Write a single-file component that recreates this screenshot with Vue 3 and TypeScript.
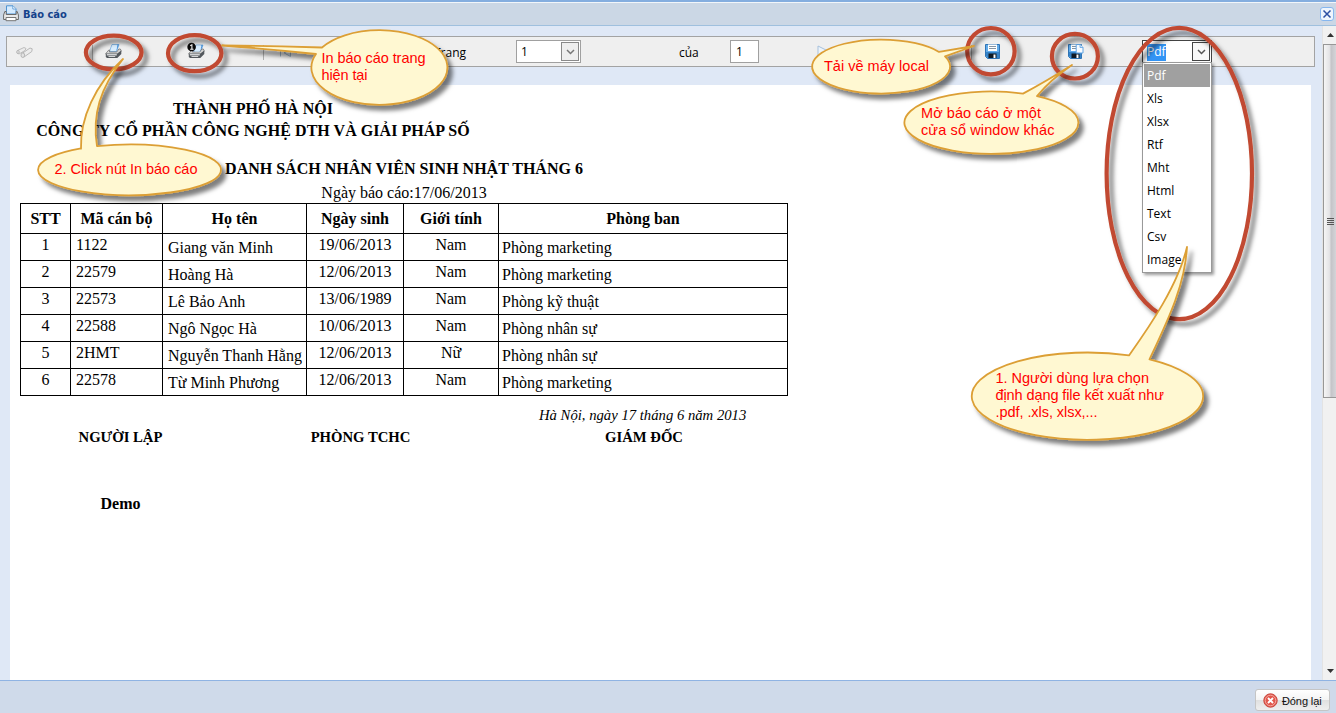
<script setup lang="ts">
import { ref } from 'vue'

interface Employee {
  code: string
  name: string
  born: string
  sex: string
  dept: string
}

const employees: Employee[] = [
  { code: '1122', name: 'Giang văn Minh', born: '19/06/2013', sex: 'Nam', dept: 'Phòng marketing' },
  { code: '22579', name: 'Hoàng Hà', born: '12/06/2013', sex: 'Nam', dept: 'Phòng marketing' },
  { code: '22573', name: 'Lê Bảo Anh', born: '13/06/1989', sex: 'Nam', dept: 'Phòng kỹ thuật' },
  { code: '22588', name: 'Ngô Ngọc Hà', born: '10/06/2013', sex: 'Nam', dept: 'Phòng nhân sự' },
  { code: '2HMT', name: 'Nguyễn Thanh Hằng', born: '12/06/2013', sex: 'Nữ', dept: 'Phòng nhân sự' },
  { code: '22578', name: 'Từ Minh Phương', born: '12/06/2013', sex: 'Nam', dept: 'Phòng marketing' },
]

const formats: string[] = ['Pdf', 'Xls', 'Xlsx', 'Rtf', 'Mht', 'Html', 'Text', 'Csv', 'Image']
const selected = ref<string>('Pdf')

interface Ring { cx: number; cy: number; rx: number; ry: number }
const rings: Ring[] = [
  { cx: 113.7, cy: 52.5, rx: 27.8, ry: 16.8 },
  { cx: 194.7, cy: 53.2, rx: 26.7, ry: 18 },
  { cx: 990.9, cy: 51.2, rx: 23.7, ry: 23.2 },
  { cx: 1074.9, cy: 56.2, rx: 23, ry: 22.3 },
  { cx: 1179.3, cy: 173.5, rx: 72.7, ry: 145.7 },
]

interface Callout { d: string; x: number; lines: { y: number; text: string; w: number }[] }
const callouts: Callout[] = [
  {
    d: 'M81 148.7C80 118 95 85 123 59C100 88 92 115 97 146.2A91.5 25.3 0 1 1 81 148.4Z',
    x: 54.5,
    lines: [{ y: 174, text: '2. Click nút In báo cáo', w: 143 }],
  },
  {
    d: 'M322 47.5A68 37.3 0 1 1 316 54Q270 49 222 45.5Q270 45.5 322 47.5Z',
    x: 321.5,
    lines: [
      { y: 63, text: 'In báo cáo trang', w: 104 },
      { y: 80, text: 'hiện tại', w: 46 },
    ],
  },
  {
    d: 'M945 56.4A69 27 0 1 1 939 51.9L974 46Z',
    x: 824,
    lines: [{ y: 71, text: 'Tải về máy local', w: 105 }],
  },
  {
    d: 'M1037 96.1A87 31.2 0 1 1 1023 93.6Q1045 82 1072 65Q1050 80 1037 96.1Z',
    x: 921,
    lines: [
      { y: 118, text: 'Mở báo cáo ở một', w: 120 },
      { y: 135, text: 'cửa sổ window khác', w: 133.5 },
    ],
  },
  {
    d: 'M1149.5 359.3A115.7 43.7 0 1 1 1129 355.4C1150 326 1178 285 1187 247C1185 285 1168 320 1149.5 359.3Z',
    x: 995.5,
    lines: [
      { y: 383, text: '1. Người dùng lựa chọn', w: 153.5 },
      { y: 400, text: 'định dạng file kết xuất như', w: 168.5 },
      { y: 417, text: '.pdf, .xls, xlsx,...', w: 102 },
    ],
  },
]
</script>

<template>
  <div class="window">
    <header class="titlebar">
      <svg class="title-icon" width="16" height="17" viewBox="0 0 16 17">
        <path d="M3.500 9V.8h6.500l3 3V9z" fill="#d5ebff" stroke="#4f93d2" />
        <path d="M9.800 1v3h3" fill="#fff" stroke="#4f93d2" stroke-width=".8" />
        <path d="M1.800 6.500L.6 10v4.500h14.800V10l-1.200-3.500h-1V9.500h-10V6.500z" fill="#e9e9e9" stroke="#6a6a6a" />
        <path d="M3 12.500h10v3.200H3z" fill="#fff" stroke="#777" />
      </svg>
      <span class="title">Báo cáo</span>
      <button class="close" aria-label="Đóng">
        <svg width="14" height="14" viewBox="0 0 14 14">
          <rect x=".5" y=".5" width="13" height="13" rx="2.500" fill="#eef5fd" stroke="#86b6ee" />
          <path d="M3.500 3.500l7 7m0-7l-7 7" stroke="#2b4fa3" stroke-width="1.500" />
        </svg>
      </button>
    </header>

    <div class="body">
      <main class="viewer">
        <div class="toolbar">
          <span class="tool">
            <svg width="17" height="13" viewBox="0 0 17 13">
              <path d="M1.500 4.500L8 1.500l2 1-1 2-6 3.500-2-1z" fill="#ececec" stroke="#bdbdbd" />
              <path d="M6 7.500L14 2l2.200.8-.4 2.700L8 11z" fill="#ececec" stroke="#b8b8b8" />
              <ellipse cx="6.800" cy="9.200" rx="1.800" ry="2.300" fill="#e2e2e2" stroke="#b4b4b4" />
              <ellipse cx="2" cy="6" rx="1.200" ry="1.700" fill="#e2e2e2" stroke="#b8b8b8" />
            </svg>
          </span>
          <span class="sep"></span>
          <span class="tool">
            <svg width="17" height="16" viewBox="0 0 17 16">
              <path d="M4.500 8.500L7 1.500h7L11.500 8.500z" fill="#d8edfe" stroke="#7fb2e2" stroke-width=".9" />
              <path d="M12 1.500h2l-2.500 7z" fill="#4f97dc" />
              <path d="M.8 10.500l3-3.500h1l-.5 2h7.500l2-3h1.500l1 2-3.500 4H1.500z" fill="#d6d6d6" stroke="#666" stroke-width=".7" />
              <path d="M5.500 8L7.500 2.200h5L10.500 8z" fill="#d8edfe" />
              <path d="M.8 10.500h11.500l4-3v3.500l-4 4H2l-1.200-1z" fill="#53585d" />
              <path d="M1.800 11h10v1.500h-10z" fill="#cfd1d3" />
              <path d="M3 13.200h7.500l-.6.9H4z" fill="#fff" />
            </svg>
          </span>
          <span class="tool">
            <svg width="19" height="18" viewBox="0 0 19 18">
              <path d="M6.500 10L9 3h7l-2.500 7z" fill="#d8edfe" stroke="#7fb2e2" stroke-width=".9" />
              <path d="M14 3h2l-2.500 7z" fill="#4f97dc" />
              <path d="M1.800 11.500l3-3.500h1l-.5 2h7.500l2-3h1.500l1 2-3.500 4H2.500z" fill="#d6d6d6" stroke="#666" stroke-width=".7" />
              <path d="M7.500 9.500l2-5.800h5l-2 5.800z" fill="#d8edfe" />
              <path d="M1.800 11.500h11.500l4-3V12l-4 4H3l-1.200-1z" fill="#53585d" />
              <path d="M2.800 12h10v1.500h-10z" fill="#cfd1d3" />
              <path d="M4 14.200h7.500l-.6.9H5z" fill="#fff" />
              <circle cx="4.600" cy="5" r="4.300" fill="#080808" />
              <path d="M3.200 3.800L4.900 2.800v4.500M3.200 7.300h3.300" stroke="#fff" stroke-width="1.100" fill="none" />
            </svg>
          </span>
          <span class="sep"></span>
          <span class="tool">
            <svg width="13" height="10" viewBox="0 0 13 10">
              <path d="M1.500 1v7.500M11.500 1L5 4.800l6.500 3.700z" fill="#dde6ee" stroke="#9db4c8" />
            </svg>
          </span>
          <label class="label page-label">Trang</label>
          <div class="combo combo-page">
            <span class="combo-value">1</span>
            <span class="arrow"><svg width="9" height="6" viewBox="0 0 9 6"><path d="M1 1l3.500 3.500L8 1" fill="none" stroke="#777" stroke-width="1.500" /></svg></span>
          </div>
          <label class="label">của</label>
          <div class="count">1</div>
          <span class="tool">
            <svg width="12" height="12" viewBox="0 0 12 12"><path d="M1 1l10 5L1 11z" fill="#eef4fa" stroke="#a7c1dc" /></svg>
          </span>
          <span class="sep"></span>
          <span class="tool">
            <svg width="15" height="15" viewBox="0 0 15 15">
              <path d="M.5.500h14v14H2.500l-2-2z" fill="#62abe9" stroke="#2f74b5" />
              <path d="M1 8h13v6H3l-2-2z" fill="#3583c8" />
              <path d="M3 .5h9V7H3z" fill="#fff" />
              <path d="M4 2.500h7M4 4.500h7" stroke="#8594a3" />
              <path d="M3.500 9.500h8V14h-8z" fill="#101a24" />
              <path d="M8.500 10.500h2V14h-2z" fill="#fff" />
            </svg>
          </span>
          <span class="tool">
            <svg width="16" height="15" viewBox="0 0 16 15">
              <path d="M.5.500h13v14H2.500l-2-2z" fill="#62abe9" stroke="#2f74b5" />
              <path d="M1 8h12v6H3l-2-2z" fill="#3583c8" />
              <path d="M3 .5h6V7H3z" fill="#fff" />
              <path d="M4 2.500h4M4 4.500h4" stroke="#8594a3" />
              <path d="M3.500 9.500h8V14h-8z" fill="#101a24" />
              <path d="M8.500 10.500h2V14h-2z" fill="#fff" />
              <path d="M8.200.500h3.800l3 3v5.500H8.200z" fill="#f7fbff" stroke="#5fa3e2" />
              <path d="M12 .5v3h3" fill="#cfe6fb" stroke="#5fa3e2" stroke-width=".8" />
            </svg>
          </span>
          <div class="combo combo-format">
            <span class="combo-value"><mark>{{ selected }}</mark></span>
            <span class="arrow"><svg width="9" height="6" viewBox="0 0 9 6"><path d="M1 1l3.500 3.500L8 1" fill="none" stroke="#555" stroke-width="1.500" /></svg></span>
            <ul class="menu">
              <li v-for="f in formats" :key="f" :class="{ active: f === selected }" @click="selected = f">{{ f }}</li>
            </ul>
          </div>
        </div>

        <article class="paper">
          <div class="org">
            <p class="city">THÀNH PHỐ HÀ NỘI</p>
            <p class="company">CÔNG TY CỔ PHẦN CÔNG NGHỆ DTH VÀ GIẢI PHÁP SỐ</p>
          </div>
          <h1>DANH SÁCH NHÂN VIÊN SINH NHẬT THÁNG 6</h1>
          <p class="date">Ngày báo cáo:17/06/2013</p>
          <table>
            <colgroup><col class="c1" /><col class="c2" /><col class="c3" /><col class="c4" /><col class="c5" /><col class="c6" /></colgroup>
            <thead>
              <tr><th>STT</th><th>Mã cán bộ</th><th>Họ tên</th><th>Ngày sinh</th><th>Giới tính</th><th>Phòng ban</th></tr>
            </thead>
            <tbody>
              <tr v-for="(e, i) in employees" :key="e.code">
                <td class="mid">{{ i + 1 }}</td>
                <td class="code">{{ e.code }}</td>
                <td class="low name">{{ e.name }}</td>
                <td class="mid">{{ e.born }}</td>
                <td class="mid">{{ e.sex }}</td>
                <td class="low dept">{{ e.dept }}</td>
              </tr>
            </tbody>
          </table>
          <p class="place">Hà Nội, ngày 17 tháng 6 năm 2013</p>
          <div class="signs">
            <span>NGƯỜI LẬP</span><span>PHÒNG TCHC</span><span>GIÁM ĐỐC</span>
          </div>
          <p class="signer">Demo</p>
        </article>
      </main>

      <div class="scrollbar">
        <span class="sb-btn"><svg width="7" height="4" viewBox="0 0 7 4"><path d="M0 4l3.500-4L7 4z" fill="#333" /></svg></span>
        <span class="thumb"><i></i><i></i><i></i><i></i></span>
        <span class="sb-btn sb-down"><svg width="7" height="4" viewBox="0 0 7 4"><path d="M0 0h7L3.500 4z" fill="#333" /></svg></span>
      </div>
    </div>

    <footer class="footer">
      <button class="btn">
        <svg width="15" height="15" viewBox="0 0 15 15">
          <circle cx="7.500" cy="7.500" r="6.700" fill="#e2574c" stroke="#c9483f" />
          <circle cx="7.500" cy="7.500" r="5.300" fill="none" stroke="#f3aaa2" />
          <path d="M5 5l5 5m0-5l-5 5" stroke="#fff" stroke-width="1.900" />
        </svg>
        <span>Đóng lại</span>
      </button>
    </footer>

    <svg class="notes" width="1336" height="713" viewBox="0 0 1336 713">
      <defs>
        <filter id="shade" x="0" y="0" width="1336" height="713" filterUnits="userSpaceOnUse">
          <feDropShadow dx="4.500" dy="5" stdDeviation="2" flood-color="#000" flood-opacity=".5" />
        </filter>
      </defs>
      <g v-for="(r, i) in rings" :key="'r' + i" filter="url(#shade)">
        <ellipse :cx="r.cx" :cy="r.cy" :rx="r.rx" :ry="r.ry" fill="none" stroke="#c14a30" stroke-width="4.200" />
      </g>
      <g v-for="(c, i) in callouts" :key="'c' + i">
        <path :d="c.d" fill="#fff8d2" stroke="#dc9f35" stroke-width="1.800" stroke-linejoin="round" filter="url(#shade)" />
        <text v-for="l in c.lines" :key="l.y" :x="c.x" :y="l.y" :textLength="l.w">{{ l.text }}</text>
      </g>
    </svg>
  </div>
</template>

<style scoped>
* { box-sizing: border-box; }
.window {
  position: relative;
  width: 1336px;
  height: 713px;
  overflow: hidden;
  display: flex;
  flex-direction: column;
  background: #dfe8f6;
  font: 12px/16px "Open Sans", "Noto Sans", sans-serif;
  color: #000;
}
p, h1, ul { margin: 0; padding: 0; }
.titlebar {
  flex: none;
  height: 26px;
  display: flex;
  align-items: center;
  padding: 1px 2px 0 3px;
  border-top: 2px solid #85aedf;
  border-bottom: 1px solid #9fc0de;
  background: #cbd7e5;
  box-shadow: inset 0 1px #f2f6fa;
}
.title-icon { margin-top: -1px; }
.title { margin: 2px 0 0 4px; font: bold 11px/16px "DejaVu Sans Condensed", sans-serif; color: #15428b; }
.close { margin-left: auto; width: 14px; height: 14px; border: 0; padding: 0; background: none; display: flex; }
.body { flex: 1; display: flex; min-height: 0; }
.viewer { flex: 1; display: flex; flex-direction: column; padding: 10px 7px 0 6px; }
.toolbar {
  flex: none;
  width: 1309px;
  height: 31px;
  border: 1px solid #a3a3a3;
  background: #efefef;
  display: grid;
  grid-template-columns: 85px 13px 82px 76px 15px 158px 80px 163px 51px 87px 154px 14px 83px 74px 71px;
  align-items: start;
}
.tool { padding-top: 7px; height: 29px; display: flex; }
.tool:first-child { padding: 9px 0 0 9px; }
.tool:nth-child(3) { padding-top: 6px; }
.tool:nth-child(4) { padding-top: 5px; }
.tool:nth-child(6) { padding: 11px 0 0 1px; }
.tool:nth-child(11) { padding-top: 8px; }
.sep { width: 1px; height: 15px; margin-top: 8px; background: #b0b0b0; }
.label { padding-top: 8px; line-height: 16px; }
.page-label { margin-left: -2px; }
.combo {
  position: relative;
  margin-top: 3px;
  height: 23px;
  width: 65px;
  border: 1px solid #a0a0a0;
  background: #fff;
  display: flex;
  justify-content: space-between;
  padding: 1px 1px 1px 4px;
}
.combo-format { width: 70px; border-color: #444; z-index: 2; padding-left: 4px; }
.combo-value { padding-top: 2px; }
mark { background: #3294f5; color: #fff; display: block; height: 17px; line-height: 16px; }
.arrow {
  width: 18px;
  height: 19px;
  border: 1px solid #8a8a8a;
  background: #efefef;
  display: flex;
  align-items: center;
  justify-content: center;
}
.combo-format .arrow { background: #f8f8f8; border-color: #444; }
.count { margin-top: 3px; width: 29px; height: 23px; border: 1px solid #a0a0a0; background: #fff; padding: 3px 0 0 5px; }
.menu {
  position: absolute;
  left: -1px;
  top: 21px;
  width: 70px;
  height: 211px;
  list-style: none;
  background: #fff;
  border: 1px solid #999;
  padding: 1px;
  box-shadow: 2px 2px 3px rgba(0, 0, 0, .4);
}
.menu li { height: 23px; line-height: 23px; padding-left: 3px; }
.menu li.active { background: #a0a0a0; color: #fff; }
.paper {
  flex: 1;
  width: 1301px;
  margin: 18px 0 0 4px;
  background: #fff;
  padding: 13px 0 0 10px;
  font: 16px/20px "Liberation Serif", serif;
}
.org { width: 466px; text-align: center; font-weight: bold; line-height: 22px; padding-bottom: 17px; }
.org p { white-space: nowrap; letter-spacing: .04px; }
h1 { width: 768px; text-align: center; font-size: 16px; line-height: 20px; }
.date { width: 768px; text-align: center; line-height: 20px; margin-top: 4px; }
table { border-collapse: collapse; table-layout: fixed; width: 768px; margin-top: 0; }
th, td { border: 1px solid #000; padding: 0; white-space: nowrap; }
th { height: 30px; line-height: 20px; }
td { height: 27px; line-height: 18px; vertical-align: top; padding-top: 2px; }
.mid { text-align: center; }
.code { padding-left: 5px; }
.low { padding-top: 5px; }
.name { padding-left: 5px; }
.dept { padding-left: 3px; }
.c1 { width: 50px; }
.c2 { width: 92px; }
.c3 { width: 144px; }
.c4 { width: 97px; }
.c5 { width: 95px; }
.c6 { width: 289px; }
.place { font-style: italic; font-size: 14.700px; line-height: 20px; padding: 9px 0 0 519px; }
.signs { display: grid; grid-template-columns: 201px 279px 288px; font-weight: bold; font-size: 14.700px; line-height: 24px; text-align: center; }
.signer { font-weight: bold; width: 201px; text-align: center; padding-top: 45px; }
.scrollbar {
  flex: none;
  width: 14px;
  display: flex;
  flex-direction: column;
  background: #f1f1f1;
  border-left: 1px solid #e3e3e3;
}
.sb-btn { height: 18px; display: flex; align-items: center; justify-content: center; padding-left: 2px; }
.sb-down { margin-top: auto; }
.thumb {
  height: 354px;
  border: 1px solid #979797;
  border-right: 0;
  background: linear-gradient(90deg, #f5f5f5, #e4e4e6 45%, #c4c4c8 60%, #d4d4d8);
  display: flex;
  flex-direction: column;
  align-items: center;
  justify-content: center;
  gap: 1px;
}
.thumb i { width: 7px; height: 1px; background: #555; }
.footer {
  flex: none;
  height: 33px;
  border-top: 1px solid #8fb3e3;
  background: #cfdaea;
  display: flex;
  justify-content: flex-end;
  align-items: flex-start;
  padding: 8px 6px 0 0;
}
.btn {
  width: 75px;
  height: 22px;
  border: 1px solid #c5c5c5;
  border-radius: 3px;
  background: linear-gradient(#fff, #f4f4f4 50%, #e0e0e0 52%, #efefef);
  display: flex;
  align-items: center;
  gap: 4px;
  padding: 1px 0 0 7px;
  font: 11px/16px "Liberation Sans", sans-serif;
  letter-spacing: -.1px;
  white-space: nowrap;
  color: #111;
}
.btn svg { flex: none; }
.notes { position: absolute; left: 0; top: 0; z-index: 5; pointer-events: none; }
.notes text { font: 14.500px "Liberation Sans", Arial, sans-serif; fill: #f00; }
</style>

<style>
body { margin: 0; overflow: hidden; }
</style>
